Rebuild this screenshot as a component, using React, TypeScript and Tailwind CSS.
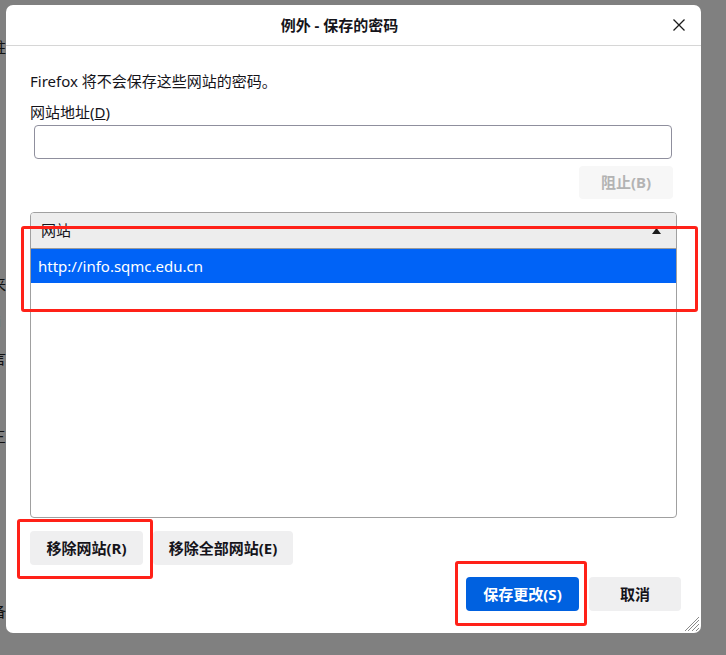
import React from "react";

const FONT = { fontFamily: '"Noto Sans", "Noto Sans CJK SC", sans-serif' };

function CloseIcon() {
  return (
    <svg width="14" height="14" viewBox="0 0 14 14" fill="none">
      <path d="M1.5 1.5 L12.5 12.5 M12.5 1.5 L1.5 12.5" stroke="#1b1b1b" strokeWidth="1.3" />
    </svg>
  );
}

function ResizeGrip() {
  return (
    <svg width="15" height="15" viewBox="0 0 15 15" fill="none">
      <path d="M14 3 L3 14 M14 7 L7 14 M14 11 L11 14 M14 0 L0 14" stroke="#8a8a8a" strokeWidth="1" />
    </svg>
  );
}

function Btn({ children, className = "" }: { children: React.ReactNode; className?: string }) {
  return (
    <button
      className={`h-[34px] whitespace-nowrap rounded-[4px] bg-[#efeff0] px-2 text-[15px] font-bold text-[#15141a] ${className}`}
    >
      {children}
    </button>
  );
}

export default function App() {
  return (
    <div className="relative h-[655px] w-[726px] overflow-hidden bg-[#808080]" style={FONT}>
      {/* background page text peeking at left edge */}
      <div className="absolute left-0 top-0 h-full w-[6px] overflow-hidden text-[15px] text-[#111]">
        <span className="absolute left-[-9px] top-[36px]">拄</span>
        <span className="absolute left-[-9px] top-[273px]">来</span>
        <span className="absolute left-[-3px] top-[310px] text-[#1a3f8f]">i</span>
        <span className="absolute left-[-9px] top-[347px]">言</span>
        <span className="absolute left-[-9px] top-[425px]">三</span>
        <span className="absolute left-[-9px] top-[600px]">备</span>
      </div>

      <div className="relative ml-[6px] mt-[5px] flex h-[628px] w-[695px] flex-col rounded-[7px] bg-white">
        {/* header */}
        <div className="relative flex h-[41px] shrink-0 items-center justify-center border-b border-[#d6d6d6] pr-[28px]">
          <span className="text-[15px] font-bold text-[#15141a]">例外 - 保存的密码</span>
          <span className="absolute right-[15px] top-[13px]">
            <CloseIcon />
          </span>
        </div>

        {/* body */}
        <div className="flex flex-1 flex-col px-[24px]">
          <p className="mt-[25px] text-[15px] leading-[20px] text-[#15141a]">Firefox 将不会保存这些网站的密码。</p>
          <p className="mt-[11px] text-[15px] leading-[20px] text-[#15141a]">
            网站地址(<span className="underline">D</span>)
          </p>
          <div className="ml-[4px] mr-[5px] mt-[3px] h-[34px] rounded-[4px] border border-[#8f8f9d]" />
          <div className="mr-[4px] mt-[7px] flex justify-end">
            <div className="flex h-[33px] w-[94px] items-center justify-center rounded-[4px] bg-[#f7f7f7] text-[15px] font-bold text-[#b3b3b3]">
              阻止(B)
            </div>
          </div>

          {/* table */}
          <div className="mt-[13px] flex h-[306px] flex-col overflow-hidden rounded-[4px] border border-[#a0a0a0]">
            <div className="flex h-[36px] shrink-0 items-center justify-between border-b border-[#9a9a9a] bg-[#ededed] pl-[10px] pr-[15px]">
              <span className="text-[15px] text-[#15141a]">网站</span>
              <svg width="9" height="6" viewBox="0 0 9 6">
                <path d="M0 6 L4.5 0 L9 6 Z" fill="#1b1b1b" />
              </svg>
            </div>
            <div className="flex h-[34px] items-center bg-[#0063f7] pl-[7px] text-[15px] text-white">
              http://info.sqmc.edu.cn
            </div>
          </div>

          <div className="mt-[13px] flex gap-[10px]">
            <Btn className="w-[113px]">移除网站(R)</Btn>
            <Btn className="w-[140px]">移除全部网站(E)</Btn>
          </div>

          <div className="mr-[-4px] mt-[12px] flex justify-end gap-[10px]">
            <button className="h-[34px] w-[113px] whitespace-nowrap rounded-[4px] bg-[#0061e0] text-[15px] font-bold text-white">
              保存更改(S)
            </button>
            <Btn className="w-[92px]">取消</Btn>
          </div>
        </div>

        <span className="absolute bottom-[1px] right-[1px] leading-none">
          <ResizeGrip />
        </span>
      </div>

      {/* red annotation boxes */}
      <div className="absolute left-[21px] top-[226px] h-[86px] w-[677px] rounded-[3px] border-[3px] border-[#ff2118]" />
      <div className="absolute left-[17px] top-[519px] h-[60px] w-[136px] rounded-[3px] border-[3px] border-[#ff2118]" />
      <div className="absolute left-[455px] top-[561px] h-[65px] w-[132px] rounded-[3px] border-[3px] border-[#ff2118]" />
    </div>
  );
}
